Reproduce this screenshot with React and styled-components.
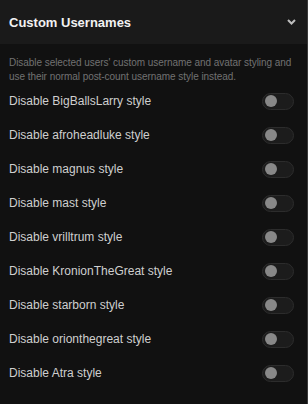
import React, { useState } from "react";
import styled, { createGlobalStyle } from "styled-components";

const GlobalStyle = createGlobalStyle`
  html, body {
    margin: 0;
    padding: 0;
    background: #111111;
  }
  body {
    font-family: "Liberation Sans", Arial, sans-serif;
  }
`;

const Panel = styled.div`
  width: 308px;
  height: 404px;
  box-sizing: border-box;
  background: #111111;
  border-right: 1px solid #3a3a3a;
  display: flex;
  flex-direction: column;
`;

const Header = styled.div`
  height: 44px;
  background: #1a1a1a;
  display: flex;
  align-items: center;
  justify-content: space-between;
  padding: 0 11px 0 9px;
`;

const Title = styled.h2`
  margin: 0;
  font-size: 13px;
  font-weight: bold;
  color: #f2f2f2;
`;

const Chevron = styled.svg`
  width: 9px;
  height: 6px;
  color: #bdbdbd;
`;

const Body = styled.div`
  padding: 12px 0 0 9px;
  display: flex;
  flex-direction: column;
`;

const Description = styled.p`
  margin: 0;
  padding-right: 9px;
  font-size: 10px;
  line-height: 14px;
  letter-spacing: -0.05px;
  color: #727272;
`;

const Row = styled.label`
  height: 34px;
  padding-right: 13px;
  display: flex;
  align-items: center;
  justify-content: space-between;
`;

const RowLabel = styled.span`
  font-size: 12px;
  color: #cfcfcf;
`;

const Track = styled.button`
  width: 32px;
  height: 17px;
  padding: 0 2px;
  box-sizing: border-box;
  border-radius: 9px;
  border: 1px solid #2c2c2c;
  background: ${({ on }) => (on ? "#3a6ea5" : "#1c1c1c")};
  display: flex;
  align-items: center;
  justify-content: ${({ on }) => (on ? "flex-end" : "flex-start")};
  cursor: pointer;
`;

const Knob = styled.span`
  width: 12px;
  height: 12px;
  border-radius: 50%;
  background: #888888;
`;

const users = [
  "BigBallsLarry",
  "afroheadluke",
  "magnus",
  "mast",
  "vrilltrum",
  "KronionTheGreat",
  "starborn",
  "orionthegreat",
  "Atra",
];

export default function App() {
  const [disabled, setDisabled] = useState({});

  return (
    <>
      <GlobalStyle />
      <Panel>
        <Header>
          <Title>Custom Usernames</Title>
          <Chevron viewBox="0 0 9 6">
            <path d="M1 1 L4.5 4.5 L8 1" fill="none" stroke="currentColor" strokeWidth="2" />
          </Chevron>
        </Header>
        <Body>
          <Description>
            Disable selected users' custom username and avatar styling and use
            their normal post-count username style instead.
          </Description>
          {users.map((name) => (
            <Row key={name}>
              <RowLabel>Disable {name} style</RowLabel>
              <Track
                on={disabled[name] ? 1 : 0}
                onClick={() => setDisabled({ ...disabled, [name]: !disabled[name] })}
              >
                <Knob />
              </Track>
            </Row>
          ))}
        </Body>
      </Panel>
    </>
  );
}
